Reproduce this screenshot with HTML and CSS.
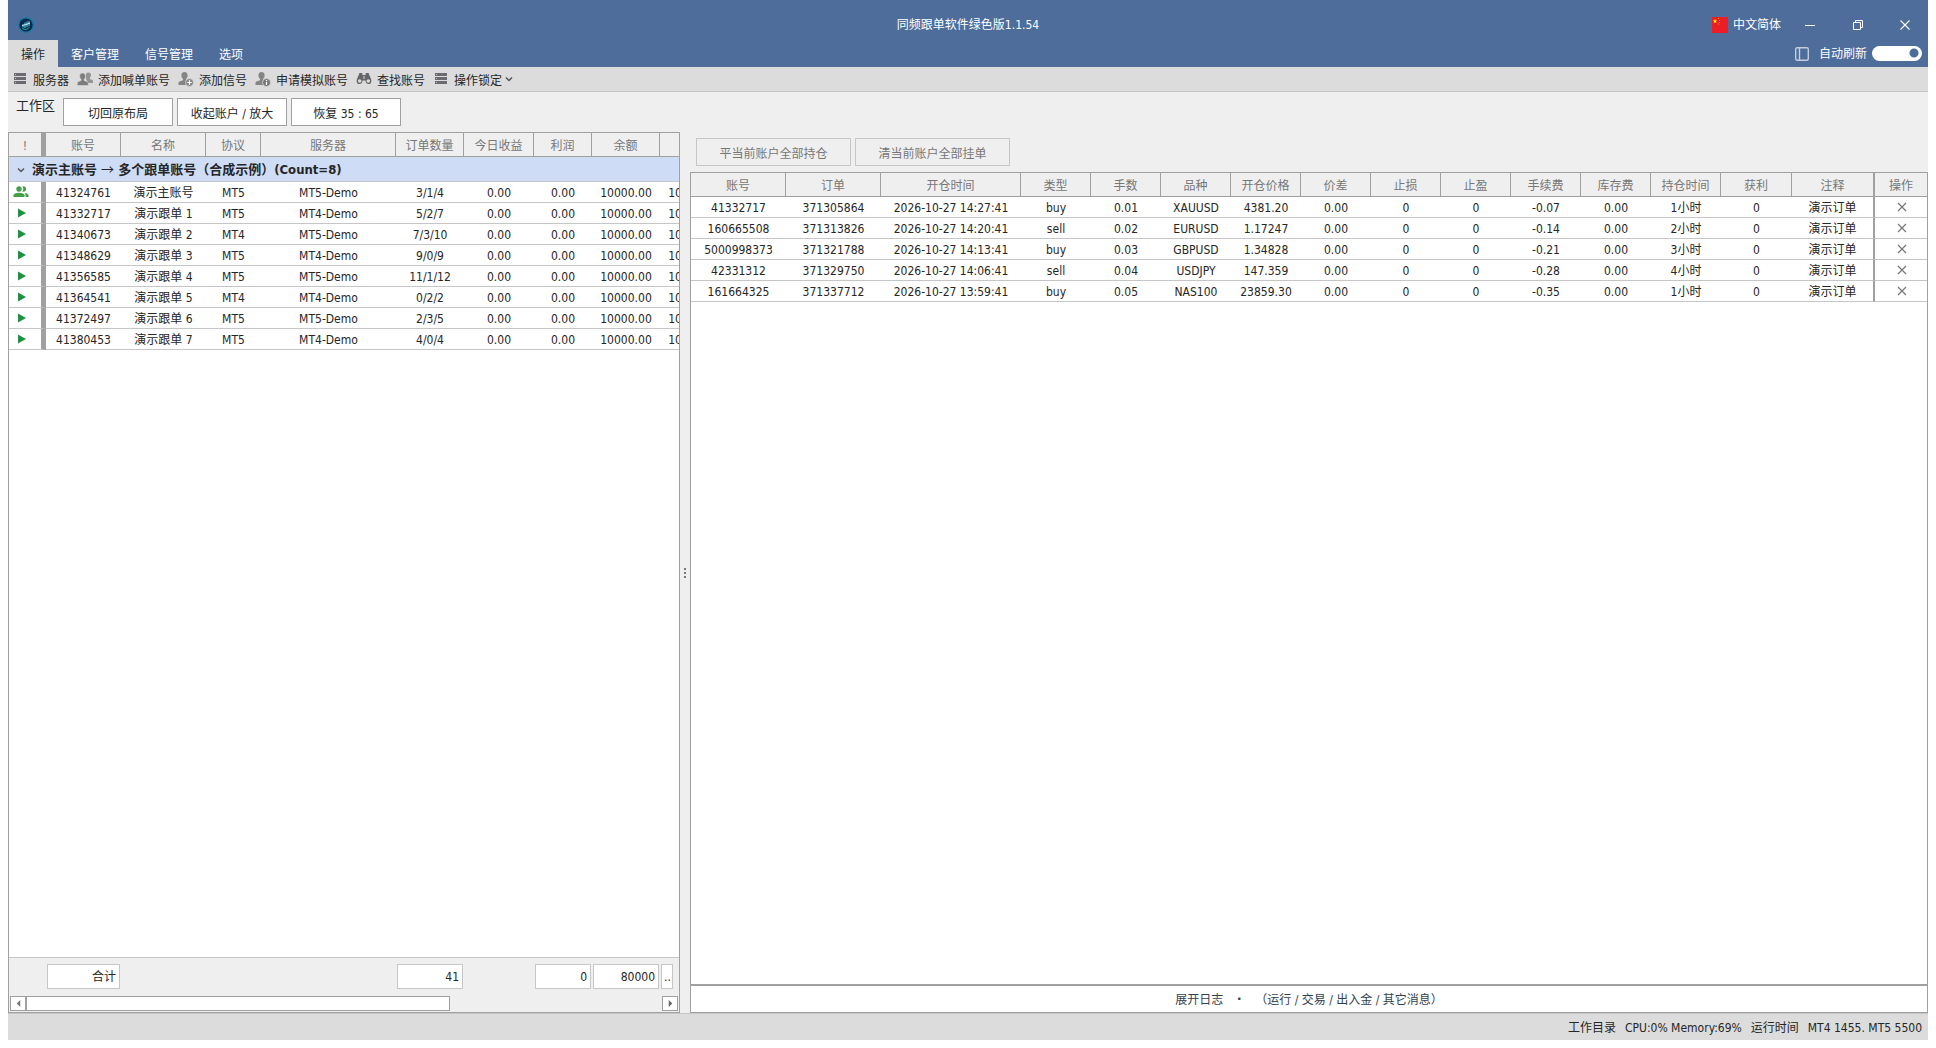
FILE: index.html
```html
<!DOCTYPE html>
<html lang="zh-CN">
<head>
<meta charset="utf-8">
<title>同频跟单软件绿色版1.1.54</title>
<link rel="stylesheet" href="styles.css">
</head>
<body>
<svg class="defs" aria-hidden="true">
  <symbol id="i-list" viewBox="0 0 16 16"><path fill="#6b6a71" d="M2 2h12v3H2zM2 6h12v3H2zM2 10h12v3H2z"/><path fill="#b9b9bd" d="M3 3h1v1H3zM3 7h1v1H3zM3 11h1v1H3z"/></symbol>
  <symbol id="i-user" viewBox="0 0 16 16"><path fill="#858585" d="M6.500 1C8.500 1 9.700 2.400 9.600 4.400c0 1.400-.6 2.700-1.500 3.400v1.400L11 10.500v3.500H0.500v-1.700c0-1.200.6-1.700 1.700-2.100L5 9.200V7.800C4 7.100 3.400 5.800 3.400 4.400 3.300 2.400 4.500 1 6.500 1z"/></symbol>
  <symbol id="i-users" viewBox="0 0 16 16"><path fill="#949494" d="M11.500 1.500c1.600 0 2.500 1 2.500 2.600 0 1.200-.5 2-1.100 2.600v1.200l2 .8c.7.300 1.100.7 1.100 1.500V12h-5l-2-4V3c.5-1 1.300-1.500 2.500-1.500z"/><path fill="#7d7d7d" stroke="#dcdcdc" stroke-width=".6" d="M5.500 2c2 0 3 1.300 3 3.200 0 1.400-.5 2.400-1.300 3.100v1.200l2.600 1c1 .4 1.500 1 1.500 2v2H.2v-2c0-1 .5-1.600 1.500-2l2.400-1V8.300C3.200 7.600 2.600 6.600 2.600 5.200 2.600 3.300 3.600 2 5.500 2z"/></symbol>
  <symbol id="i-find" viewBox="0 0 16 16"><path fill="#66666a" d="M3.500 2h2.800v2h3.400V2h2.800l2.500 6c1 3-.2 5-2.300 5C10.500 13 9.500 11.500 9.500 9.500h-3C6.500 11.500 5.500 13 3.300 13 1.200 13 0 11 1 8z"/><circle cx="3.700" cy="10" r="1.800" fill="#dcdcdc"/><circle cx="12.300" cy="10" r="1.800" fill="#dcdcdc"/><path fill="#dcdcdc" d="M7.500 5h1v3h-1z"/></symbol>
  <symbol id="i-play" viewBox="0 0 12 12"><path fill="#219042" d="M2 1.500l8 4.500-8 4.500z"/></symbol>
  <symbol id="i-x" viewBox="0 0 10 10"><path fill="none" stroke="#777" stroke-width="1.200" d="M1 1l8 8M9 1 1 9"/></symbol>
  <symbol id="i-chev" viewBox="0 0 8 8"><path fill="none" stroke="#555" stroke-width="1.500" d="M1 2.500l3 3 3-3"/></symbol>
</svg>

<header class="title-area">
  <div class="title-bar">
    <div class="title-side">
      <svg class="logo" viewBox="0 0 16 16"><circle cx="8" cy="8" r="7.200" fill="#0b2a4e" stroke="#1379a3" stroke-width="1.200"/><path d="M5 10.500V7.500M7 11V5.500M9 10V4.500M11 9V4" stroke="#54c8e8" stroke-width="1.100"/><path d="M4 8.500l4-1 4-1.500" stroke="#cdf1f7" fill="none"/><path d="M4.500 11.500q3.500 2.500 7-1.500" stroke="#20b58f" fill="none"/></svg>
    </div>
    <h1 class="title-text">同频跟单软件绿色版1.1.54</h1>
    <div class="title-side title-right">
      <button class="lang"><svg class="flag" viewBox="0 0 16 16"><path fill="#ee1c25" d="M0 0h16v16H0z"/><path fill="#ff0" d="M3 2l.6 1.600h1.600L3.900 4.600l.5 1.600L3 5.200l-1.400 1 .5-1.600L.8 3.600h1.600z"/><path fill="#f8a01c" d="M6 1h1v1H6zM7 3h1v1H7zM7 5h1v1H7zM6 6.500h1v1H6z"/></svg><span>中文简体</span></button>
      <button class="win" aria-label="最小化"><svg viewBox="0 0 10 10"><path fill="#fff" d="M0 5h10v1H0z"/></svg></button>
      <button class="win" aria-label="还原"><svg viewBox="0 0 10 10"><path fill="none" stroke="#fff" d="M.5 2.500h7v7h-7zM2.500 2.500v-2h7v7h-2"/></svg></button>
      <button class="win" aria-label="关闭"><svg viewBox="0 0 10 10"><path fill="none" stroke="#fff" stroke-width="1.100" d="M.5.5l9 9M9.500.5l-9 9"/></svg></button>
    </div>
  </div>
  <div class="menu-bar">
    <nav class="tabs">
      <button class="tab tab-on">操作</button>
      <button class="tab">客户管理</button>
      <button class="tab">信号管理</button>
      <button class="tab">选项</button>
    </nav>
    <div class="menu-right">
      <button class="plain" aria-label="面板"><svg class="panel-icon" viewBox="0 0 14 14"><rect x=".7" y=".7" width="12.600" height="12.600" rx="1.500" fill="none" stroke="#c3cede" stroke-width="1.400"/><path d="M4.500 1v12" stroke="#c3cede" stroke-width="1.400"/></svg></button>
      <label class="refresh">自动刷新<input class="toggle" type="checkbox" checked></label>
    </div>
  </div>
</header>

<div class="toolbar">
  <button class="tool"><svg><use href="#i-list"/></svg>服务器</button>
  <button class="tool"><svg><use href="#i-users"/></svg>添加喊单账号</button>
  <button class="tool"><svg viewBox="0 0 16 16"><use href="#i-user"/><circle cx="11.500" cy="11.500" r="4" fill="#858585" stroke="#dcdcdc" stroke-width=".8"/><path stroke="#fff" stroke-width="1.200" d="M11.500 9.300v4.400M9.300 11.500h4.400"/></svg>添加信号</button>
  <button class="tool"><svg viewBox="0 0 16 16"><use href="#i-user"/><circle cx="11.500" cy="11.500" r="4" fill="#76767a" stroke="#dcdcdc" stroke-width=".8"/><path stroke="#fff" stroke-width="1.300" d="M11.500 9v1.200M11.500 11v3"/></svg>申请模拟账号</button>
  <button class="tool"><svg><use href="#i-find"/></svg>查找账号</button>
  <button class="tool"><svg><use href="#i-list"/></svg>操作锁定<svg class="chev"><use href="#i-chev"/></svg></button>
</div>

<div class="workspace">
  <span class="workspace-label">工作区</span>
  <button class="btn">切回原布局</button>
  <button class="btn">收起账户 / 放大</button>
  <button class="btn">恢复 35 : 65</button>
</div>

<main class="split">
  <section class="accounts">
    <div class="grid-body">
      <table class="grid accounts-grid">
        <colgroup><col class="w37"><col class="w75"><col class="w85"><col class="w55"><col class="w135"><col class="w68"><col class="w70"><col class="w58"><col class="w68"><col class="w68"></colgroup>
        <thead><tr><th class="pin">!</th><th>账号</th><th>名称</th><th>协议</th><th>服务器</th><th>订单数量</th><th>今日收益</th><th>利润</th><th>余额</th><th></th></tr></thead>
        <tbody>
          <tr class="group"><td colspan="10"><svg class="chev"><use href="#i-chev"/></svg>演示主账号 <span class="arrow">→</span> 多个跟单账号（合成示例）(Count=8)</td></tr>
          <tr><td class="pin"><svg class="master" viewBox="0 0 16 12"><g fill="#43a047"><circle cx="6" cy="3" r="2.700"/><path d="M.5 11V9.300C.5 7.700 3 6.800 6 6.800s5.500.9 5.500 2.500V11z"/><path d="M9.500.5a2.700 2.700 0 1 1 0 5c1-1.500 1-3.500 0-5zM11.500 7c2.300.3 4 1.100 4 2.300V11h-3V9.300c0-.9-.3-1.700-1-2.300z"/></g></svg></td><td>41324761</td><td>演示主账号</td><td>MT5</td><td>MT5-Demo</td><td>3/1/4</td><td>0.00</td><td>0.00</td><td>10000.00</td><td>10000.00</td></tr>
          <tr><td class="pin"><svg class="play"><use href="#i-play"/></svg></td><td>41332717</td><td>演示跟单 1</td><td>MT5</td><td>MT4-Demo</td><td>5/2/7</td><td>0.00</td><td>0.00</td><td>10000.00</td><td>10000.00</td></tr>
          <tr><td class="pin"><svg class="play"><use href="#i-play"/></svg></td><td>41340673</td><td>演示跟单 2</td><td>MT4</td><td>MT5-Demo</td><td>7/3/10</td><td>0.00</td><td>0.00</td><td>10000.00</td><td>10000.00</td></tr>
          <tr><td class="pin"><svg class="play"><use href="#i-play"/></svg></td><td>41348629</td><td>演示跟单 3</td><td>MT5</td><td>MT4-Demo</td><td>9/0/9</td><td>0.00</td><td>0.00</td><td>10000.00</td><td>10000.00</td></tr>
          <tr><td class="pin"><svg class="play"><use href="#i-play"/></svg></td><td>41356585</td><td>演示跟单 4</td><td>MT5</td><td>MT5-Demo</td><td>11/1/12</td><td>0.00</td><td>0.00</td><td>10000.00</td><td>10000.00</td></tr>
          <tr><td class="pin"><svg class="play"><use href="#i-play"/></svg></td><td>41364541</td><td>演示跟单 5</td><td>MT4</td><td>MT4-Demo</td><td>0/2/2</td><td>0.00</td><td>0.00</td><td>10000.00</td><td>10000.00</td></tr>
          <tr><td class="pin"><svg class="play"><use href="#i-play"/></svg></td><td>41372497</td><td>演示跟单 6</td><td>MT5</td><td>MT5-Demo</td><td>2/3/5</td><td>0.00</td><td>0.00</td><td>10000.00</td><td>10000.00</td></tr>
          <tr><td class="pin"><svg class="play"><use href="#i-play"/></svg></td><td>41380453</td><td>演示跟单 7</td><td>MT5</td><td>MT4-Demo</td><td>4/0/4</td><td>0.00</td><td>0.00</td><td>10000.00</td><td>10000.00</td></tr>
        </tbody>
      </table>
    </div>
    <div class="summary">
      <span class="sum sum-label">合计</span>
      <span class="sum sum-orders">41</span>
      <span class="sum sum-profit">0</span>
      <span class="sum sum-balance">80000</span>
      <span class="sum sum-more">..</span>
    </div>
    <div class="scroll">
      <button class="scroll-btn" aria-label="向左滚动"><svg viewBox="0 0 8 8"><path fill="#777" d="M6 0v8L2 4z"/></svg></button>
      <div class="scroll-track"><div class="scroll-thumb"></div></div>
      <button class="scroll-btn" aria-label="向右滚动"><svg viewBox="0 0 8 8"><path fill="#666" d="M2 0v8l4-4z"/></svg></button>
    </div>
  </section>

  <div class="splitter"><i></i><i></i><i></i></div>

  <section class="orders">
    <div class="order-actions">
      <button class="btn btn-wide" disabled>平当前账户全部持仓</button>
      <button class="btn btn-wide" disabled>清当前账户全部挂单</button>
    </div>
    <div class="orders-body">
      <table class="grid orders-grid">
        <colgroup><col class="w95"><col class="w95"><col class="w140"><col class="w70"><col class="w70"><col class="w70"><col class="w70"><col class="w70"><col class="w70"><col class="w70"><col class="w70"><col class="w70"><col class="w70"><col class="w71"><col><col class="w52"></colgroup>
        <thead><tr><th>账号</th><th>订单</th><th>开仓时间</th><th>类型</th><th>手数</th><th>品种</th><th>开仓价格</th><th>价差</th><th>止损</th><th>止盈</th><th>手续费</th><th>库存费</th><th>持仓时间</th><th>获利</th><th class="note">注释</th><th>操作</th></tr></thead>
        <tbody>
          <tr><td>41332717</td><td>371305864</td><td>2026-10-27 14:27:41</td><td>buy</td><td>0.01</td><td>XAUUSD</td><td>4381.20</td><td>0.00</td><td>0</td><td>0</td><td>-0.07</td><td>0.00</td><td>1小时</td><td>0</td><td class="note">演示订单</td><td><button class="close" aria-label="平仓"><svg class="x"><use href="#i-x"/></svg></button></td></tr>
          <tr><td>160665508</td><td>371313826</td><td>2026-10-27 14:20:41</td><td>sell</td><td>0.02</td><td>EURUSD</td><td>1.17247</td><td>0.00</td><td>0</td><td>0</td><td>-0.14</td><td>0.00</td><td>2小时</td><td>0</td><td class="note">演示订单</td><td><button class="close" aria-label="平仓"><svg class="x"><use href="#i-x"/></svg></button></td></tr>
          <tr><td>5000998373</td><td>371321788</td><td>2026-10-27 14:13:41</td><td>buy</td><td>0.03</td><td>GBPUSD</td><td>1.34828</td><td>0.00</td><td>0</td><td>0</td><td>-0.21</td><td>0.00</td><td>3小时</td><td>0</td><td class="note">演示订单</td><td><button class="close" aria-label="平仓"><svg class="x"><use href="#i-x"/></svg></button></td></tr>
          <tr><td>42331312</td><td>371329750</td><td>2026-10-27 14:06:41</td><td>sell</td><td>0.04</td><td>USDJPY</td><td>147.359</td><td>0.00</td><td>0</td><td>0</td><td>-0.28</td><td>0.00</td><td>4小时</td><td>0</td><td class="note">演示订单</td><td><button class="close" aria-label="平仓"><svg class="x"><use href="#i-x"/></svg></button></td></tr>
          <tr><td>161664325</td><td>371337712</td><td>2026-10-27 13:59:41</td><td>buy</td><td>0.05</td><td>NAS100</td><td>23859.30</td><td>0.00</td><td>0</td><td>0</td><td>-0.35</td><td>0.00</td><td>1小时</td><td>0</td><td class="note">演示订单</td><td><button class="close" aria-label="平仓"><svg class="x"><use href="#i-x"/></svg></button></td></tr>
        </tbody>
      </table>
    </div>
    <button class="log-bar"><span>展开日志</span><span>・</span><span>（运行 / 交易 / 出入金 / 其它消息）</span></button>
  </section>
</main>

<footer class="status">
  <span>工作目录</span>
  <span>CPU:0% Memory:69%</span>
  <span>运行时间</span>
  <span>MT4 1455. MT5 5500</span>
</footer>
</body>
</html>
```
FILE: styles.css
```css
* { box-sizing: border-box; }

:root {
  --blue: #4e6d9b;
  --bar: #dcdcdc;
  --panel: #efefef;
  --line: #a0a0a0;
  --soft: #c6c6c6;
  --text: #262626;
  --muted: #777;
}

body {
  margin: 0;
  padding: 0 8px 8px;
  height: 100vh;
  display: flex;
  flex-direction: column;
  background: #fff;
  color: var(--text);
  font: 12px/16px "DejaVu Sans Condensed", "Noto Sans", "Noto Sans CJK SC", sans-serif;
}

button {
  font: inherit;
  color: inherit;
  margin: 0;
  padding: 0;
  border: 0;
  background: none;
  white-space: nowrap;
}

svg { display: block; flex: none; }
.defs { display: none; }
.plain { display: inline-flex; }

/* title and menu */
.title-area { background: var(--blue); color: #fff; }
.title-bar { display: flex; height: 40px; padding-top: 9px; align-items: center; }
.title-side { flex: 1; display: flex; align-items: center; }
.title-right { justify-content: flex-end; }
.title-text { margin: 0; font-size: 12px; font-weight: 400; }
.logo { width: 16px; height: 16px; margin-left: 10px; }
.lang { display: flex; align-items: center; gap: 5px; margin-right: 5px; }
.flag { width: 16px; height: 16px; }
.win { width: 48px; height: 30px; display: flex; align-items: center; justify-content: center; }
.win:last-child { width: 46px; }
.win svg { width: 10px; height: 10px; }

.menu-bar { display: flex; justify-content: space-between; height: 27px; }
.tabs { display: flex; }
.tab { padding: 2px 13px 0; }
.tab-on { background: var(--bar); color: var(--text); }
.menu-right { display: flex; align-items: center; gap: 10px; padding-right: 6px; }
.panel-icon { width: 14px; height: 14px; }
.refresh { display: flex; align-items: center; gap: 5px; }
.toggle {
  appearance: none;
  margin: 0;
  width: 50px;
  height: 15px;
  border-radius: 8px;
  background: radial-gradient(circle at 42px 7px, var(--blue) 4px, #fff 5px);
}

/* toolbar */
.toolbar {
  display: flex;
  gap: 8px;
  height: 25px;
  padding: 0 4px;
  background: var(--bar);
  border-bottom: 1px solid var(--soft);
}
.tool { display: flex; align-items: center; gap: 5px; padding-top: 3px; }
.tool svg { width: 16px; height: 16px; margin-bottom: 3px; }
.tool .chev, .chev { width: 8px; height: 8px; }
.tool .chev { margin-left: -2px; }

.workspace { display: flex; gap: 4px; height: 40px; padding: 6px 8px 0; background: var(--panel); }
.workspace-label { font-size: 13px; width: 43px; }
.btn { width: 110px; height: 28px; padding-top: 3px; border: 1px solid var(--line); background: #fff; }
.btn-wide { width: 155px; }
.btn:disabled { color: var(--muted); background: var(--panel); border-color: var(--soft); }

/* split view */
.split { flex: 1; display: flex; min-height: 0; background: var(--panel); }
.accounts {
  flex: 0 0 35%;
  min-width: 0;
  display: flex;
  flex-direction: column;
  border: 1px solid var(--line);
}
.grid-body { flex: 1; overflow: hidden; background: #fff; }

.grid { table-layout: fixed; border-collapse: separate; border-spacing: 0; }
.accounts-grid { width: 719px; }
.orders-grid { width: 100%; }
.grid th, .grid td { padding: 2px 0 0; text-align: center; white-space: nowrap; }
.grid th {
  height: 24px;
  font-weight: 400;
  color: var(--muted);
  background: var(--panel);
  border-right: 1px solid var(--line);
  border-bottom: 1px solid var(--line);
}
.grid td { height: 21px; border-bottom: 1px solid var(--soft); }
.grid .pin { border-right: 5px solid var(--line); }
.grid .note { border-right: 2px solid var(--line); }
.orders-grid th:last-child { border-right: 0; }
.grid .group td {
  height: 25px;
  padding-left: 8px;
  text-align: left;
  font-size: 13px;
  font-weight: 700;
  background: #cedcf5;
}
.group .chev { display: inline-block; margin-right: 7px; }
.arrow { font-family: "Noto Sans CJK SC", sans-serif; font-weight: 400; line-height: 1; }
.grid td.pin { padding: 0; }
.master { width: 16px; height: 12px; margin-left: 4px; }
.play { width: 12px; height: 12px; margin-left: 7px; }
.close { display: block; margin: 0 auto; padding: 0 0 3px 1px; }
.x { width: 10px; height: 10px; }

.w37 { width: 37px; }
.w52 { width: 52px; }
.w55 { width: 55px; }
.w58 { width: 58px; }
.w68 { width: 68px; }
.w70 { width: 70px; }
.w71 { width: 71px; }
.w75 { width: 75px; }
.w85 { width: 85px; }
.w95 { width: 95px; }
.w135 { width: 135px; }
.w140 { width: 140px; }

/* totals line up with the account columns */
.summary {
  display: grid;
  grid-template-columns: 37px 75px 85px 55px 135px 68px 70px 58px 68px 14px;
  padding: 6px 0;
  border-top: 1px solid var(--soft);
}
.sum {
  height: 25px;
  margin: 0 1px;
  padding: 4px 3px 3px;
  line-height: 16px;
  text-align: right;
  background: #fff;
  border: 1px solid var(--soft);
}
.sum-label { grid-column: 2; }
.sum-orders { grid-column: 6; }
.sum-profit { grid-column: 8; }
.sum-balance { grid-column: 9; }
.sum-more { grid-column: 10; padding-left: 2px; padding-right: 2px; }

.scroll { display: flex; height: 17px; padding: 1px; }
.scroll-btn {
  width: 16px;
  height: 15px;
  display: flex;
  align-items: center;
  justify-content: center;
  background: #fff;
  border: 1px solid var(--line);
}
.scroll-btn svg { width: 7px; height: 7px; }
.scroll-track { flex: 1; }
.scroll-thumb { width: 66.6%; height: 15px; background: #fff; border: 1px solid var(--line); }

.splitter { width: 10px; display: flex; flex-direction: column; justify-content: center; align-items: center; gap: 2px; }
.splitter i { width: 2px; height: 2px; background: #777; }

.orders { flex: 1; min-width: 0; display: flex; flex-direction: column; }
.order-actions { display: flex; gap: 4px; padding: 6px 6px; }
.orders-body { flex: 1; background: #fff; border: 1px solid var(--line); }
.log-bar {
  display: flex;
  justify-content: center;
  align-items: center;
  gap: 10px;
  height: 28px;
  padding-top: 2px;
  color: #33414f;
  background: #fff;
  border: 1px solid var(--line);
}

.status {
  display: flex;
  justify-content: flex-end;
  align-items: center;
  gap: 9px;
  height: 27px;
  padding: 2px 6px 0;
  background: var(--bar);
  border-top: 1px solid var(--soft);
}
```
